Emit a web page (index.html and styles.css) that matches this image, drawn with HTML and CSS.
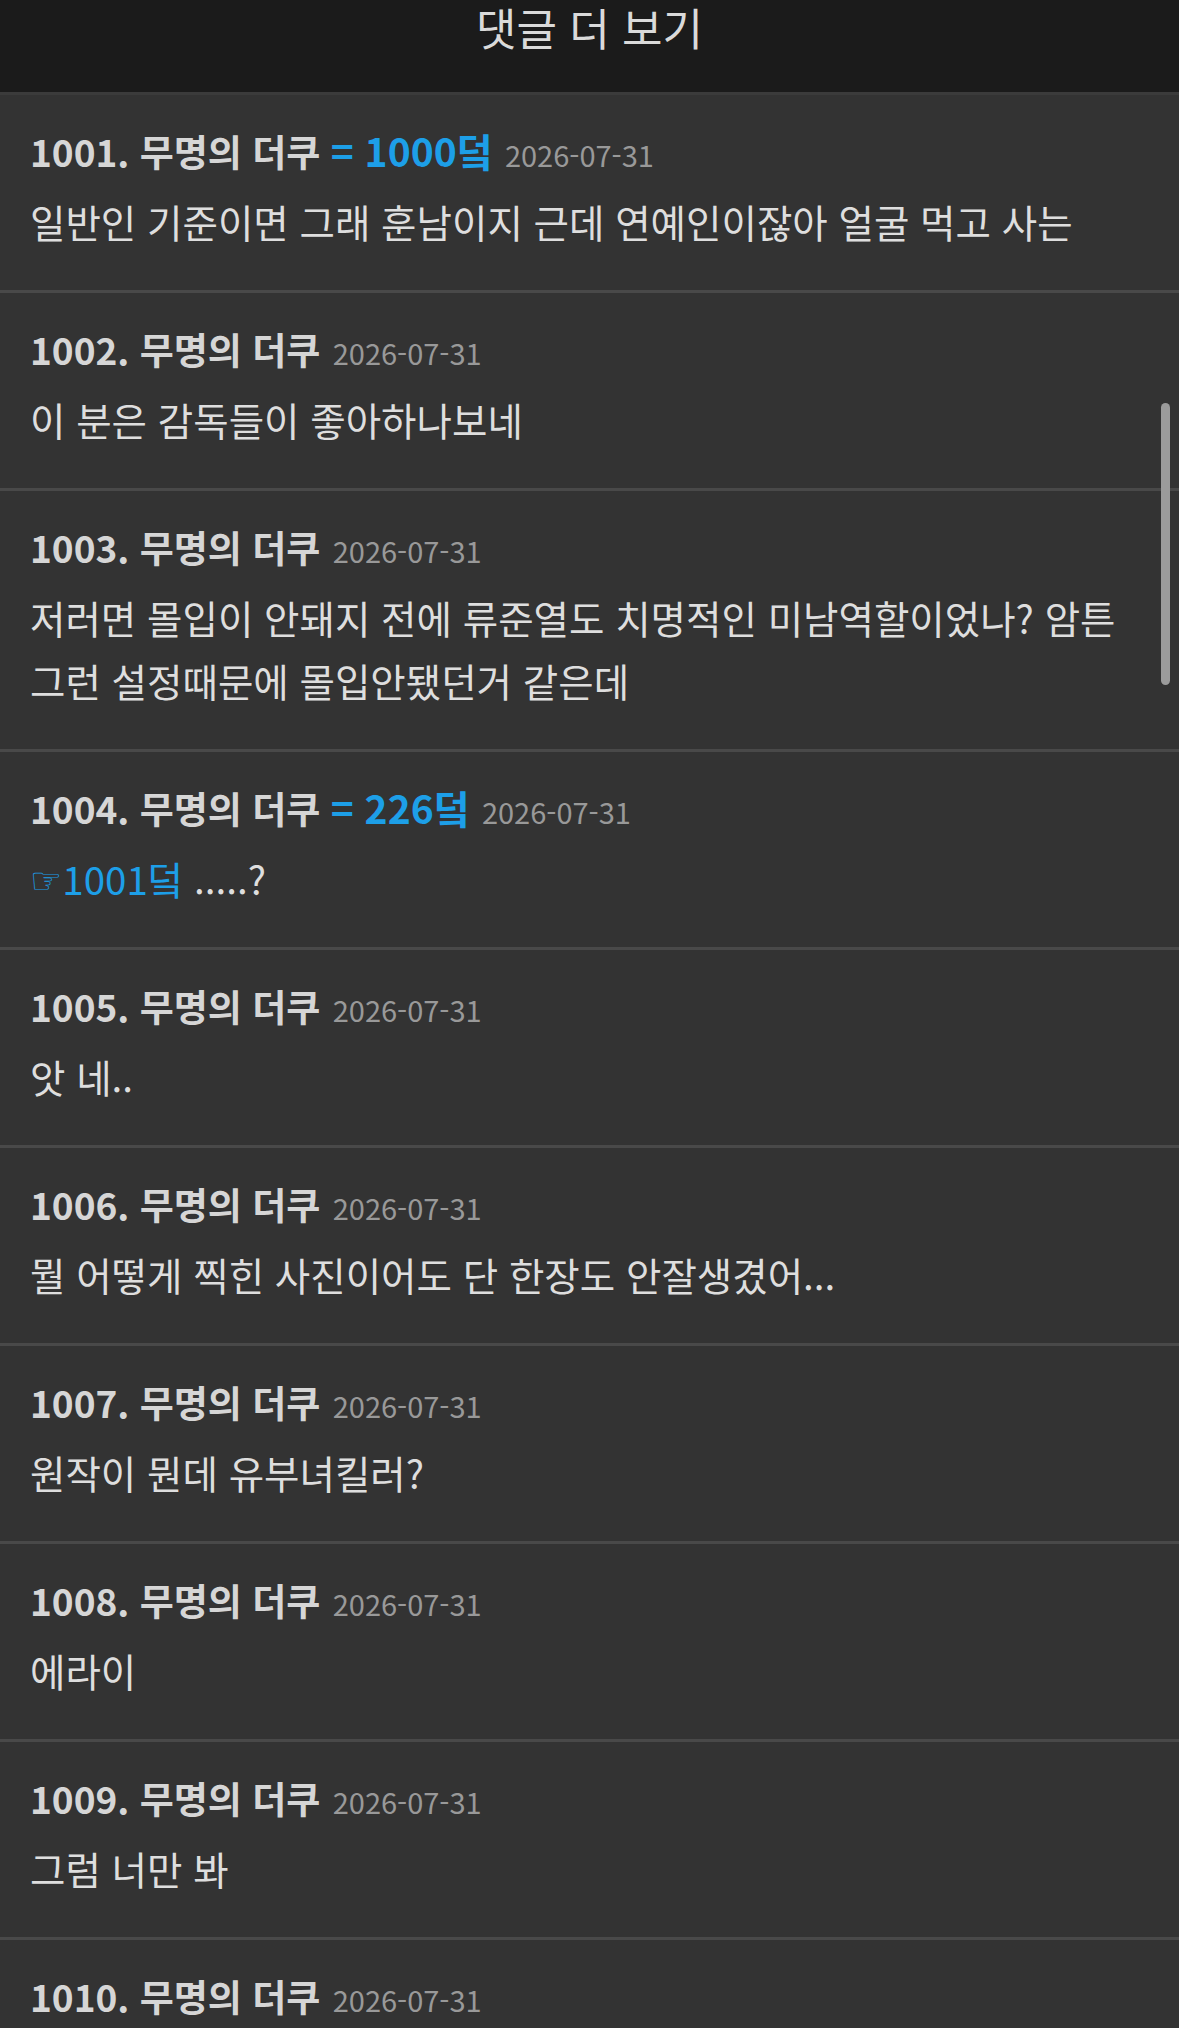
FILE: index.html
```html
<html lang="ko">
<head>
  <meta charset="UTF-8">
  <meta name="viewport" content="width=device-width">
  <title>댓글 더 보기</title>
  <link rel="stylesheet" href="styles.css">
</head>

<body>

<div class="top">
  <h1 class="title">댓글 더 보기</h1>
</div>

<div class="list">
  <div class="cmt">
    <p class="head"><b>1001. 무명의 더쿠</b> <span class="ref">= 1000덬</span> <span class="date">2026-07-31</span></p>
    <p class="txt">일반인 기준이면 그래 훈남이지 근데 연예인이잖아 얼굴 먹고 사는</p>
  </div>
  <div class="cmt">
    <p class="head"><b>1002. 무명의 더쿠</b> <span class="date">2026-07-31</span></p>
    <p class="txt">이 분은 감독들이 좋아하나보네</p>
  </div>
  <div class="cmt">
    <p class="head"><b>1003. 무명의 더쿠</b> <span class="date">2026-07-31</span></p>
    <p class="txt">저러면 몰입이 안돼지 전에 류준열도 치명적인 미남역할이었나? 암튼 그런 설정때문에 몰입안됐던거 같은데</p>
  </div>
  <div class="cmt">
    <p class="head"><b>1004. 무명의 더쿠</b> <span class="ref">= 226덬</span> <span class="date">2026-07-31</span></p>
    <p class="txt"><a class="link" href="#"><span class="hand">☞</span>1001덬</a> .....?</p>
  </div>
  <div class="cmt">
    <p class="head"><b>1005. 무명의 더쿠</b> <span class="date">2026-07-31</span></p>
    <p class="txt">앗 네..</p>
  </div>
  <div class="cmt">
    <p class="head"><b>1006. 무명의 더쿠</b> <span class="date">2026-07-31</span></p>
    <p class="txt">뭘 어떻게 찍힌 사진이어도 단 한장도 안잘생겼어...</p>
  </div>
  <div class="cmt">
    <p class="head"><b>1007. 무명의 더쿠</b> <span class="date">2026-07-31</span></p>
    <p class="txt">원작이 뭔데 유부녀킬러?</p>
  </div>
  <div class="cmt">
    <p class="head"><b>1008. 무명의 더쿠</b> <span class="date">2026-07-31</span></p>
    <p class="txt">에라이</p>
  </div>
  <div class="cmt">
    <p class="head"><b>1009. 무명의 더쿠</b> <span class="date">2026-07-31</span></p>
    <p class="txt">그럼 너만 봐</p>
  </div>
  <div class="cmt">
    <p class="head"><b>1010. 무명의 더쿠</b> <span class="date">2026-07-31</span></p>
  </div>
</div>

<div class="thumb"></div>

</body>
</html>
```

FILE: styles.css
```css
html {
    overflow: hidden;
}
body {
    margin: 0;
    background: #333333;
    font-family: "Noto Sans CJK KR", "Noto Sans", sans-serif;
    color: #dcdcdc;
}
.top {
    height: 92px;
    background: #1b1b1b;
    border-bottom: 3px solid #3b3b3b;
}
.title {
    margin: 0;
    text-align: center;
    font-size: 44px;
    font-weight: 400;
    line-height: 54px;
    color: #dadada;
}
.cmt {
    padding: 31px 30px 37px;
    border-bottom: 3px solid #494949;
}
.head {
    margin: 0;
    font-size: 37px;
    line-height: 51px;
    white-space: nowrap;
}
.head b {
    font-weight: 700;
    color: #d6d6d6;
}
.ref {
    font-weight: 700;
    font-size: 39px;
    line-height: 1;
    color: #1d9fe8;
}
.date {
    font-size: 29px;
    line-height: 1;
    color: #999999;
    margin-left: 2px;
}
.txt {
    margin: 13px 0 0;
    font-size: 38.5px;
    line-height: 63px;
    color: #dedede;
    word-break: keep-all;
}
.link {
    color: #1d9fe8;
    text-decoration: none;
}
.hand {
    font-family: "DejaVu Sans", sans-serif;
    font-size: 36px;
    line-height: 1;
    vertical-align: 2px;
}
.thumb {
    position: absolute;
    left: 1161px;
    top: 403px;
    width: 9px;
    height: 282px;
    border-radius: 5px;
    background: #9b9b9b;
}
```
